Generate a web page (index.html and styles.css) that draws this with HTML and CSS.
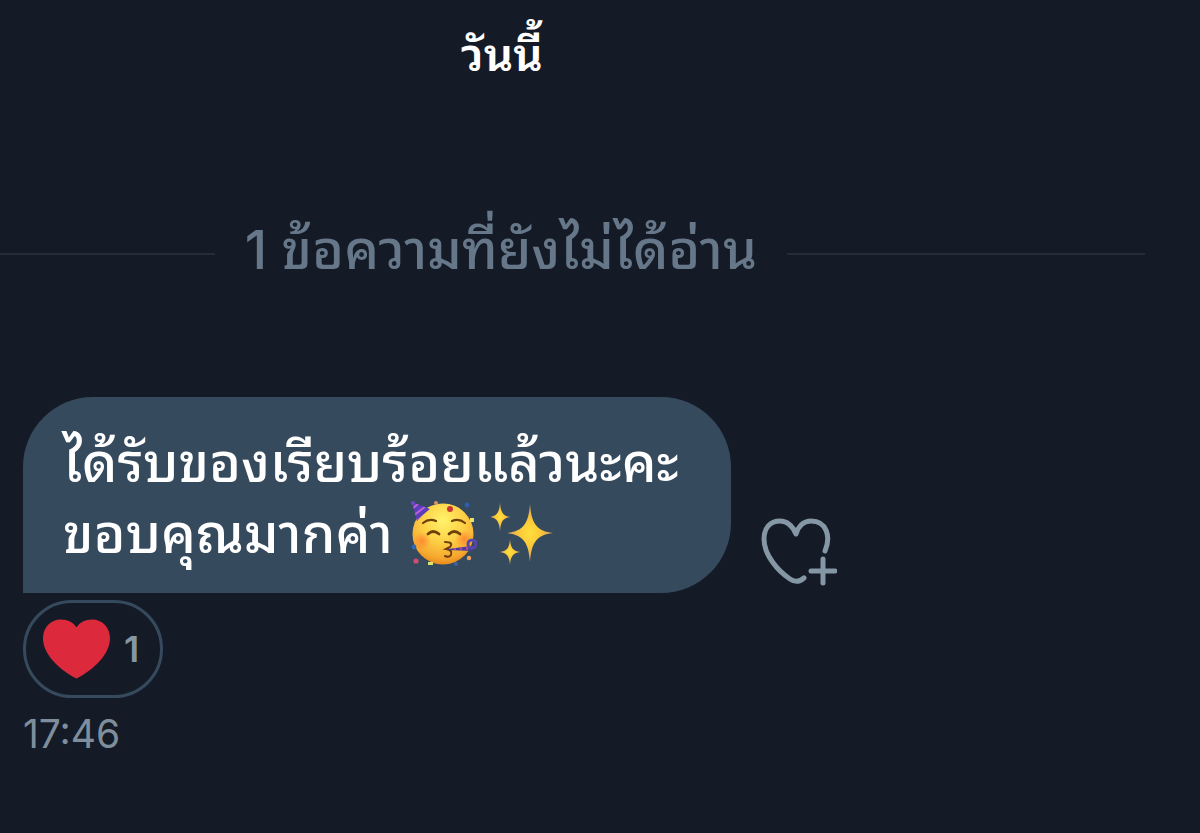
FILE: index.html
```
<!DOCTYPE html>
<html lang="th">
<head>
  <meta charset="UTF-8">
  <title>ข้อความ</title>
  <meta name="viewport" content="width=device-width, initial-scale=1.0">
  <link rel="stylesheet" href="styles.css">
</head>
<body>
  <main class="chat">
    <h2 class="day">วันนี้</h2>

    <div class="unread">
      <span class="line"></span>
      <span class="unread-text">1 ข้อความที่ยังไม่ได้อ่าน</span>
      <span class="line"></span>
    </div>

    <article class="message">
      <div class="message-row">
        <div class="bubble">
          <p>ได้รับของเรียบร้อยแล้วนะคะ</p>
          <p class="with-emoji">
            <span>ขอบคุณมากค่า</span>
            <svg class="emoji party" viewBox="0 0 66 66" role="img" aria-label="หน้าปาร์ตี้">
              <defs>
                <radialGradient id="face" cx="50%" cy="28%" r="72%">
                  <stop offset="0" stop-color="#fff36b"/>
                  <stop offset="0.5" stop-color="#fdcf45"/>
                  <stop offset="0.85" stop-color="#f6a82f"/>
                  <stop offset="1" stop-color="#e88c1c"/>
                </radialGradient>
                <radialGradient id="cheek">
                  <stop offset="0" stop-color="#ff7b2e" stop-opacity="0.75"/>
                  <stop offset="1" stop-color="#ff7b2e" stop-opacity="0"/>
                </radialGradient>
                <clipPath id="hat"><path d="M1 1L19 8Q10 15 6 20Z"/></clipPath>
              </defs>
              <circle cx="32" cy="33" r="30.5" fill="url(#face)"/>
              <circle cx="11" cy="40" r="9" fill="url(#cheek)"/>
              <circle cx="53" cy="38" r="9" fill="url(#cheek)"/>
              <path d="M1 1L19 8Q10 15 6 20Z" fill="#5b3fb8"/>
              <g clip-path="url(#hat)" stroke="#c15de0" stroke-width="2">
                <path d="M0 9L9 1M2 15L15 5M3 22L22 8"/>
              </g>
              <circle cx="2" cy="2" r="2" fill="#7048c8"/>
              <g fill="none" stroke="#6f4009" stroke-linecap="round">
                <path d="M12 22Q18 17 25 20M41 20Q48 17 54 22" stroke-width="2.2"/>
                <path d="M17 33Q22 28 28 33M38 33Q43 28 49 33" stroke-width="2.8"/>
                <path d="M34 41Q43 41 39 46L35 48Q42 49 40 54Q38 57 34 55" stroke-width="2"/>
              </g>
              <path d="M37 48L60 45V50L37 49Z" fill="#4f3b9c"/>
              <path d="M44 47v2M50 46v3M56 46v3" stroke="#a94a9a" stroke-width="2"/>
              <circle cx="61" cy="43" r="4" fill="none" stroke="#5947ae" stroke-width="3"/>
              <circle cx="39" cy="8" r="3" fill="#c73732"/>
              <circle cx="25" cy="2" r="2" fill="#de9068"/>
              <circle cx="56" cy="4" r="2.4" fill="#315fae"/>
              <path d="M59 17h4v4h-4z" fill="#ede06a"/>
              <circle cx="3" cy="46" r="2.4" fill="#2f68bb"/>
              <circle cx="5" cy="60" r="2.6" fill="#cf4e70"/>
              <path d="M17 61h5v3h-5z" fill="#dce36a"/>
              <circle cx="58" cy="57" r="2.2" fill="#efa05a"/>
              <circle cx="45" cy="63" r="2" fill="#3f62a8"/>
            </svg>
            <svg class="emoji sparkles" viewBox="0 0 66 66" role="img" aria-label="ประกาย">
              <defs>
                <radialGradient id="star">
                  <stop offset="0" stop-color="#ffdf3d"/>
                  <stop offset="0.45" stop-color="#fcc938"/>
                  <stop offset="1" stop-color="#d99a60"/>
                </radialGradient>
                <path id="sparkle" d="M0 -29C1.5 -10 6 -2 23 0C6 2 1.5 10 0 29C-1.5 10 -6 2 -23 0C-6 -2 -1.5 -10 0 -29Z"/>
              </defs>
              <g fill="url(#star)">
                <use href="#sparkle" x="39" y="32"/>
                <use href="#sparkle" transform="translate(9 16) scale(0.45 0.5)"/>
                <use href="#sparkle" transform="translate(19 51) scale(0.45)"/>
              </g>
            </svg>
          </p>
        </div>
        <button class="react" type="button" aria-label="เพิ่มความรู้สึก">
          <svg viewBox="0 0 76 68" fill="none" stroke="#8596a5" stroke-width="5" stroke-linecap="round" stroke-linejoin="round">
            <path d="M64 33C70 19 66 3 50 3C42 3 37 9 35 16C32 9 27 3 19 3C9 3 3 10 3 21C3 37 17 53 29 61Q36 66 43 60"/>
            <path d="M62 41v24M50 53h24"/>
          </svg>
        </button>
      </div>

      <button class="reaction" type="button">
        <svg viewBox="0 0 68 60" aria-hidden="true">
          <path d="M34 60C24 55 0 39 0 19C0 8 8 0 18 0C25 0 31 3 34 8C37 3 43 0 50 0C60 0 68 8 68 19C68 39 44 55 34 60Z" fill="#dc293c"/>
        </svg>
        <span>1</span>
      </button>
      <time class="time">17:46</time>
    </article>
  </main>
</body>
</html>
```
FILE: styles.css
```
* {
  box-sizing: border-box;
}

body {
  margin: 0;
  background: #151b26;
  color: #fff;
  font-family: Inter, "Noto Sans Thai Looped", "Loma", "Waree", "Noto Sans", sans-serif;
}

p,
h2 {
  margin: 0;
}

button {
  padding: 0;
  background: none;
  border: none;
  color: inherit;
  font: inherit;
  cursor: pointer;
}

svg {
  display: block;
}

.day {
  padding: 26px 196px 0 0;
  font-size: 46px;
  font-weight: 600;
  line-height: 56px;
  text-align: center;
}

.unread {
  display: grid;
  grid-template-columns: 3fr auto 5fr;
  align-items: center;
  gap: 30px;
  margin: 136px 55px 0 0;
  color: #657789;
}

.unread-text {
  padding-bottom: 8px;
  font-size: 54px;
  font-weight: 500;
  line-height: 64px;
}

.line {
  height: 2px;
  background: #232c38;
}

.message {
  margin: 107px 23px 0;
}

.message-row {
  display: flex;
  align-items: flex-end;
  gap: 30px;
}

.bubble {
  padding: 30px 52px 24px 40px;
  background: #364a5e;
  border-radius: 70px 70px 70px 0;
  font-size: 54px;
  font-weight: 500;
  line-height: 71px;
}

.with-emoji {
  display: flex;
  align-items: center;
}

.emoji {
  width: 66px;
  height: 66px;
}

.party {
  margin: 0 14px 0 18px;
}

.react {
  margin-bottom: 7px;
}

.react svg {
  width: 76px;
  height: 68px;
}

.reaction {
  display: flex;
  align-items: center;
  gap: 14px;
  height: 98px;
  margin-top: 7px;
  padding: 0 21px 0 17px;
  border: 3px solid #364a5e;
  border-radius: 49px;
  color: #8596a5;
  font-size: 36px;
  font-weight: 600;
}

.reaction svg {
  width: 67px;
  height: 60px;
}

.time {
  display: block;
  margin-top: 10px;
  color: #7f8e9c;
  font-size: 39px;
  line-height: 52px;
}
```
